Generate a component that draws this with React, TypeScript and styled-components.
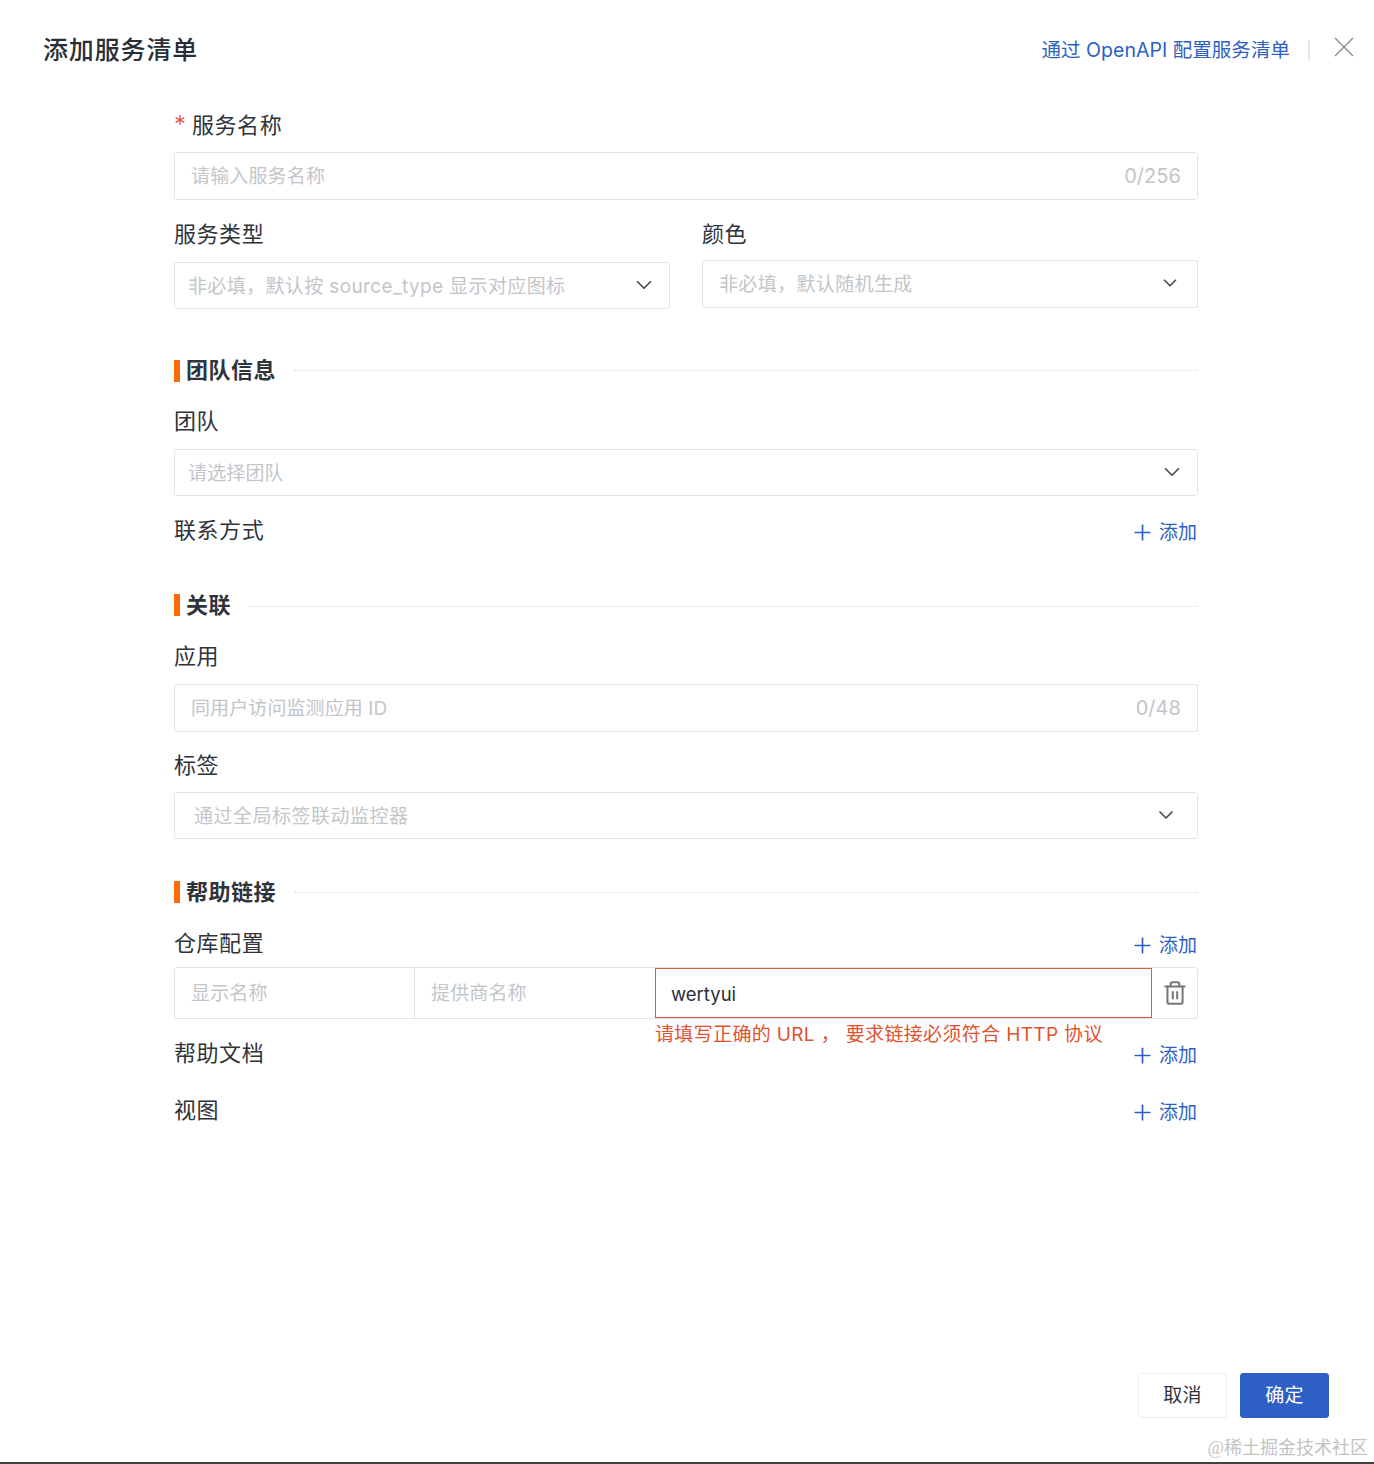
import React from "react";
import styled, { createGlobalStyle } from "styled-components";
import { ChevronDown, Plus, Trash2 } from "lucide-react";

const Global = createGlobalStyle`
  html, body { margin: 0; padding: 0; background: #fff; }
  body { font-family: Inter, "Noto Sans CJK SC", sans-serif; color: #2a2e36; }
  * { box-sizing: border-box; }
`;

const Page = styled.div`
  position: relative;
  width: 1374px;
  height: 1464px;
  display: flex;
  flex-direction: column;
  border-bottom: 2px solid #3f4144;
  overflow: hidden;
`;

const Header = styled.header`
  height: 100px;
  flex: none;
  display: flex;
  align-items: center;
  padding: 0 20px 0 43px;
`;

const Title = styled.h1`
  margin: 0;
  flex: 1;
  font-size: 25px;
  line-height: 34px;
  font-weight: 500;
  letter-spacing: 0.85px;
  color: #2a2e36;
`;

const HeaderLink = styled.a`
  padding-bottom: 3px;
  font-size: 19.5px;
  letter-spacing: 0.04px;
  color: #2d5fc4;
  white-space: nowrap;
`;

const Divider = styled.span`
  width: 2px;
  height: 21px;
  margin: 0 24px 0 18px;
  background: #e4e6ea;
`;

const CloseButton = styled.svg`
  width: 20px;
  height: 20px;
  margin-top: -6px;
  stroke: #85888e;
  stroke-width: 1.3;
  fill: none;
`;

const Form = styled.main`
  flex: 1;
  width: 1024px;
  margin-left: 174px;
  margin-top: 11px;
`;

const LabelRow = styled.div<{ $top?: number; $bottom?: number }>`
  height: 28px;
  display: flex;
  align-items: center;
  justify-content: space-between;
  margin-top: ${(p) => p.$top ?? 0}px;
  margin-bottom: ${(p) => p.$bottom ?? 0}px;
`;

const Label = styled.label`
  font-size: 22px;
  line-height: 28px;
  letter-spacing: 0.55px;
  color: #2f333a;
`;

const Required = styled.span`
  width: 18px;
  font-size: 24px;
  line-height: 28px;
  font-weight: 300;
  color: #e0532f;
`;

const LabelWrap = styled.span`
  display: flex;
  align-items: center;
`;

const AddButton = styled.span`
  display: flex;
  align-items: center;
  gap: 4px;
  margin-top: 5px;
  margin-right: 1px;
  font-size: 19px;
  line-height: 24px;
  color: #2d5fc4;
`;

const Field = styled.div<{ $height?: number; $pad?: number; $right?: number; $top?: number }>`
  height: ${(p) => p.$height ?? 48}px;
  margin-top: ${(p) => p.$top ?? 0}px;
  display: flex;
  align-items: center;
  justify-content: space-between;
  padding: 0 ${(p) => p.$right ?? 16}px 0 ${(p) => p.$pad ?? 16}px;
  border: 1px solid #e3e4e6;
  border-radius: 3px;
  background: #fff;
`;

const Placeholder = styled.span<{ $spacing?: number }>`
  padding-bottom: 3px;
  font-size: 19px;
  letter-spacing: ${(p) => p.$spacing ?? 0.15}px;
  color: #c3c5c9;
  white-space: nowrap;
`;

const Counter = styled.span`
  font-size: 20px;
  letter-spacing: 0.05px;
  color: #c3c5c9;
`;

const Chevron = styled(ChevronDown)`
  margin-bottom: 2px;
  color: #4a4d52;
  flex: none;
`;

const TwoCols = styled.div`
  display: grid;
  grid-template-columns: 496px 496px;
  gap: 32px;
  margin-top: 20px;
`;

const Section = styled.div<{ $top: number }>`
  height: 22px;
  margin-top: ${(p) => p.$top}px;
  display: flex;
  align-items: center;
`;

const SectionBar = styled.span`
  width: 6px;
  height: 22px;
  margin-right: 6px;
  background: #ff6a0a;
`;

const SectionTitle = styled.h2<{ $lift?: number }>`
  margin: 0 18px ${(p) => p.$lift ?? 0}px 0;
  font-size: 22px;
  line-height: 22px;
  font-weight: 700;
  letter-spacing: 0.5px;
  color: #2f333a;
`;

const SectionLine = styled.span<{ $lift?: number; $drop?: number }>`
  flex: 1;
  margin-bottom: ${(p) => p.$lift ?? 0}px;
  margin-top: ${(p) => p.$drop ?? 0}px;
  border-top: 1px dotted #d9dadc;
`;

const LinkRow = styled.div`
  height: 52px;
  margin-top: 10px;
  display: grid;
  grid-template-columns: 240px 240px 1fr 45px;
  border: 1px solid #e3e4e6;
  border-radius: 3px;
`;

const Cell = styled.div<{ $divider?: boolean }>`
  display: flex;
  align-items: center;
  padding-left: 16px;
  border-right: ${(p) => (p.$divider ? "1px solid #e3e4e6" : "none")};
`;

const ErrorCell = styled.div`
  position: relative;
  display: flex;
  align-items: center;
  padding: 1px 0 0 15px;
  border: 1px solid #d9593a;
  font-size: 18.5px;
  color: #2a2e36;
`;

const ErrorText = styled.span`
  position: absolute;
  left: -1px;
  top: 52px;
  font-size: 19px;
  line-height: 28px;
  letter-spacing: 0.35px;
  white-space: nowrap;
  color: #e0532f;
`;

const TrashCell = styled.div`
  display: flex;
  align-items: center;
  justify-content: center;
  color: #77797d;
`;

const Footer = styled.footer`
  flex: none;
  height: 44px;
  margin-bottom: 45px;
  padding-right: 45px;
  display: flex;
  justify-content: flex-end;
  gap: 13px;
`;

const Button = styled.button<{ $primary?: boolean }>`
  width: 89px;
  height: 45px;
  padding: 0 0 5px;
  border-radius: 3px;
  border: 1px solid ${(p) => (p.$primary ? "#2d5fc4" : "#eceded")};
  background: ${(p) => (p.$primary ? "#2d5fc4" : "#fff")};
  color: ${(p) => (p.$primary ? "#fff" : "#2f333a")};
  font-family: inherit;
  font-size: 19px;
  letter-spacing: 0.3px;
`;

const Watermark = styled.span`
  position: absolute;
  right: 6px;
  bottom: 1px;
  font-family: "Liberation Serif", "Noto Sans CJK SC", serif;
  font-size: 18px;
  line-height: 26px;
  color: #c2c3c5;
`;

const Add = () => (
  <AddButton>
    <Plus size={25} strokeWidth={1.6} />
    添加
  </AddButton>
);

export default function App() {
  return (
    <Page>
      <Global />
      <Header>
        <Title>添加服务清单</Title>
        <HeaderLink>通过 OpenAPI 配置服务清单</HeaderLink>
        <Divider />
        <CloseButton viewBox="0 0 20 20">
          <path d="M1 1 19 19M19 1 1 19" />
        </CloseButton>
      </Header>
      <Form>
        <LabelRow $bottom={13}>
          <LabelWrap>
            <Required>*</Required>
            <Label>服务名称</Label>
          </LabelWrap>
        </LabelRow>
        <Field>
          <Placeholder>请输入服务名称</Placeholder>
          <Counter>0/256</Counter>
        </Field>
        <TwoCols>
          <div>
            <LabelRow>
              <Label>服务类型</Label>
            </LabelRow>
            <Field $height={47} $top={14} $pad={13} $right={12}>
              <Placeholder $spacing={0.37}>非必填，默认按 source_type 显示对应图标</Placeholder>
              <Chevron size={26} strokeWidth={1.6} />
            </Field>
          </div>
          <div>
            <LabelRow>
              <Label>颜色</Label>
            </LabelRow>
            <Field $top={12} $right={16}>
              <Placeholder $spacing={0.37}>非必填，默认随机生成</Placeholder>
              <Chevron size={22} strokeWidth={1.9} />
            </Field>
          </div>
        </TwoCols>
        <Section $top={51}>
          <SectionBar />
          <SectionTitle $lift={2}>团队信息</SectionTitle>
          <SectionLine $lift={2} />
        </Section>
        <LabelRow $top={25} $bottom={14}>
          <Label>团队</Label>
        </LabelRow>
        <Field $height={47} $pad={13} $right={12}>
          <Placeholder>请选择团队</Placeholder>
          <Chevron size={26} strokeWidth={1.6} />
        </Field>
        <LabelRow $top={20}>
          <Label>联系方式</Label>
          <Add />
        </LabelRow>
        <Section $top={50}>
          <SectionBar />
          <SectionTitle>关联</SectionTitle>
          <SectionLine $drop={2} />
        </Section>
        <LabelRow $top={26} $bottom={14}>
          <Label>应用</Label>
        </LabelRow>
        <Field>
          <Placeholder $spacing={0.1}>同用户访问监测应用 ID</Placeholder>
          <Counter>0/48</Counter>
        </Field>
        <LabelRow $top={19} $bottom={13}>
          <Label>标签</Label>
        </LabelRow>
        <Field $height={47} $pad={19} $right={19}>
          <Placeholder $spacing={0.5}>通过全局标签联动监控器</Placeholder>
          <Chevron size={24} strokeWidth={1.7} />
        </Field>
        <Section $top={42}>
          <SectionBar />
          <SectionTitle>帮助链接</SectionTitle>
          <SectionLine />
        </Section>
        <LabelRow $top={26}>
          <Label>仓库配置</Label>
          <Add />
        </LabelRow>
        <LinkRow>
          <Cell $divider>
            <Placeholder>显示名称</Placeholder>
          </Cell>
          <Cell>
            <Placeholder>提供商名称</Placeholder>
          </Cell>
          <ErrorCell>
            wertyui
            <ErrorText>请填写正确的 URL ， 要求链接必须符合 HTTP 协议</ErrorText>
          </ErrorCell>
          <TrashCell>
            <Trash2 size={26} strokeWidth={1.9} />
          </TrashCell>
        </LinkRow>
        <LabelRow $top={20}>
          <Label>帮助文档</Label>
          <Add />
        </LabelRow>
        <LabelRow $top={29}>
          <Label>视图</Label>
          <Add />
        </LabelRow>
      </Form>
      <Footer>
        <Button>取消</Button>
        <Button $primary>确定</Button>
      </Footer>
      <Watermark>@稀土掘金技术社区</Watermark>
    </Page>
  );
}
